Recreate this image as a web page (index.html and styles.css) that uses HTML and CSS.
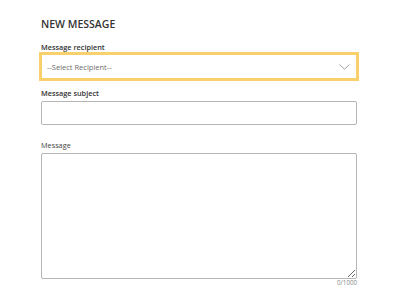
FILE: index.html
```html
<!DOCTYPE html>
<html lang="en">
  <head>
    <meta charset="UTF-8" />
    <meta name="viewport" content="width=device-width, initial-scale=1.0" />
    <title>New message</title>
    <link rel="stylesheet" href="styles.css">
  </head>
  <body>
    <div class="compose">
      <h1>NEW MESSAGE</h1>
      <div class="field">
        <label for="recipient">Message recipient</label>
        <div class="select" id="recipient">
          <span>--Select Recipient--</span>
          <svg width="11" height="6" viewBox="0 0 11 6">
            <path d="M0.5 0.5L5.5 5.2L10.5 0.5" fill="none" stroke="#8a8a8a" stroke-width="0.8" />
          </svg>
        </div>
      </div>
      <div class="field">
        <label for="subject">Message subject</label>
        <input type="text" id="subject" />
      </div>
      <div class="field field-message">
        <label for="body">Message</label>
        <textarea id="body"></textarea>
        <div class="counter">0/1000</div>
      </div>
    </div>
  </body>
</html>
```

FILE: styles.css
```css
body {
  margin: 0;
  padding: 0;
  background-color: #fff;
  font-family: "Open Sans", sans-serif;
  color: #333;
}
.compose {
  width: 316px;
  padding: 16.5px 0 0 41px;
}
h1 {
  margin: 0 0 11.5px;
  font-size: 10.5px;
  line-height: 14px;
  font-weight: 600;
  color: #333;
}
.field {
  display: flex;
  flex-direction: column;
  margin-bottom: 9px;
}
.field-message {
  margin-top: 15px;
  margin-bottom: 0;
}
.field-message label {
  font-weight: 400;
  color: #444;
}
label {
  display: block;
  margin-bottom: 1px;
  font-size: 7.3px;
  line-height: 11px;
  font-weight: 600;
  color: #333;
}
.select {
  display: flex;
  justify-content: space-between;
  align-items: center;
  height: 25px;
  padding: 0 6px 0 5px;
  border: 1px solid #f8d06c;
  box-shadow: 0 0 0 2px #f8d06c;
  box-sizing: border-box;
  background-color: #fff;
  font-size: 7.5px;
  color: #6e6e6e;
}
.select svg {
  display: block;
}
input[type="text"] {
  margin: 1px 0 0;
  height: 24px;
  padding: 0 5px;
  border: 1px solid #b5b5b5;
  border-radius: 2px;
  box-sizing: border-box;
  font-family: inherit;
}
textarea {
  margin: 1px 0 0;
  height: 126px;
  padding: 4px 5px;
  border: 1px solid #b5b5b5;
  border-radius: 2px;
  box-sizing: border-box;
  font-family: inherit;
}
.counter {
  text-align: right;
  font-size: 6.2px;
  line-height: 8px;
  color: #888;
}
```
